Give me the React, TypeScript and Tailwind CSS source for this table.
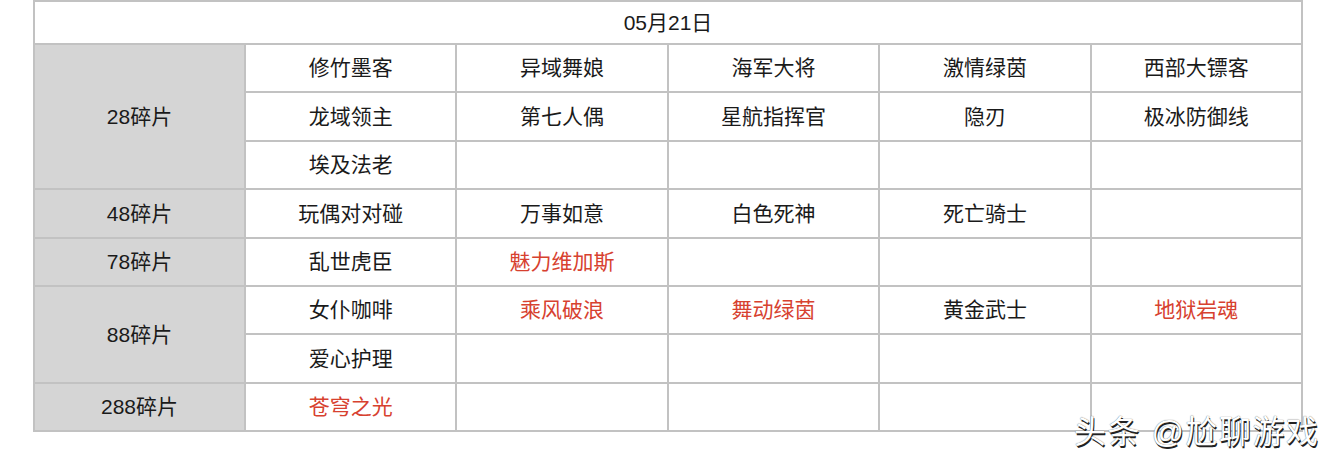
import React from "react"

type Cell = { text: string; red?: boolean }

const rows: { label: string; cells: Cell[][] }[] = [
  {
    label: "28碎片",
    cells: [
      [{ text: "修竹墨客" }, { text: "异域舞娘" }, { text: "海军大将" }, { text: "激情绿茵" }, { text: "西部大镖客" }],
      [{ text: "龙域领主" }, { text: "第七人偶" }, { text: "星航指挥官" }, { text: "隐刃" }, { text: "极冰防御线" }],
      [{ text: "埃及法老" }, { text: "" }, { text: "" }, { text: "" }, { text: "" }],
    ],
  },
  {
    label: "48碎片",
    cells: [[{ text: "玩偶对对碰" }, { text: "万事如意" }, { text: "白色死神" }, { text: "死亡骑士" }, { text: "" }]],
  },
  {
    label: "78碎片",
    cells: [[{ text: "乱世虎臣" }, { text: "魅力维加斯", red: true }, { text: "" }, { text: "" }, { text: "" }]],
  },
  {
    label: "88碎片",
    cells: [
      [{ text: "女仆咖啡" }, { text: "乘风破浪", red: true }, { text: "舞动绿茵", red: true }, { text: "黄金武士" }, { text: "地狱岩魂", red: true }],
      [{ text: "爱心护理" }, { text: "" }, { text: "" }, { text: "" }, { text: "" }],
    ],
  },
  {
    label: "288碎片",
    cells: [[{ text: "苍穹之光", red: true }, { text: "" }, { text: "" }, { text: "" }, { text: "" }]],
  },
]

const line = "border-[#c2c2c2]"

export default function App() {
  return (
    <div
      className="relative h-[464px] w-[1334px] overflow-hidden bg-white text-[21px] text-[#1a1a1a]"
      style={{ fontFamily: '"Liberation Sans", "Noto Sans CJK SC", sans-serif' }}
    >
      <div className="ml-[33px] w-[1270px]">
        {/* tail of the row above */}
        <div className={`grid h-[2px] grid-cols-6 border-l-2 ${line}`}>
          {Array.from({ length: 6 }).map((_, i) => (
            <div key={i} className={`border-r-2 border-b-2 ${line}`} />
          ))}
        </div>
        <div className={`flex h-[43px] items-center justify-center border-x-2 border-b-2 ${line}`}>
          05月21日
        </div>
        {rows.map((group) => (
          <div key={group.label} className={`flex border-l-2 ${line}`}>
            <div
              className={`flex w-[211px] shrink-0 items-center justify-center border-r-2 border-b-2 ${line} bg-[#d5d5d5]`}
            >
              {group.label}
            </div>
            <div className="flex-1">
              {group.cells.map((row, ri) => (
                <div key={ri} className="grid h-[48.4px] grid-cols-5">
                  {row.map((c, ci) => (
                    <div
                      key={ci}
                      className={`flex items-center justify-center border-r-2 border-b-2 ${line} ${
                        c.red ? "text-[#d7412f]" : ""
                      }`}
                    >
                      {c.text}
                    </div>
                  ))}
                </div>
              ))}
            </div>
          </div>
        ))}
      </div>
      <div
        className="absolute left-[1074px] top-[408px] text-[32px] tracking-[1.5px] text-white"
        style={{ textShadow: "1px 2px 0 #222, 0 0 1px #444" }}
      >
        头条 @尬聊游戏
      </div>
    </div>
  )
}
